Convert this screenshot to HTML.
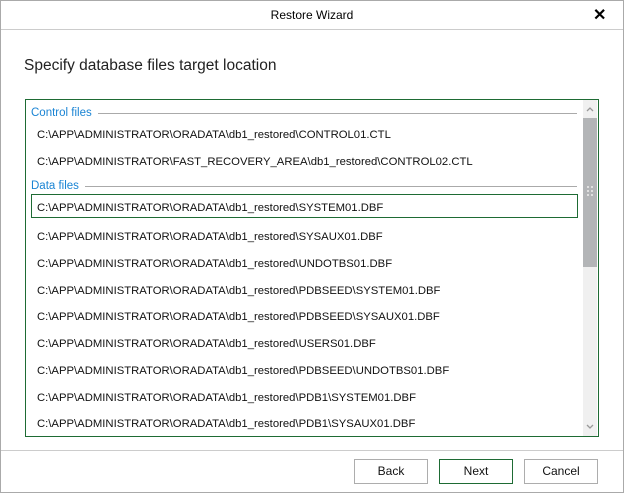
<!DOCTYPE html><html><head><style>
body{margin:0;width:624px;height:493px;font-family:"Liberation Sans",sans-serif;background:#fff;position:relative;overflow:hidden}
.win{position:absolute;left:0;top:0;width:622px;height:491px;border:1px solid #aaa}
.abs{position:absolute}
.row{position:absolute;left:37px;font-size:11.3px;color:#111;white-space:nowrap;line-height:14px}
.sec{position:absolute;left:31px;font-size:11.5px;color:#1a84d4;line-height:14px;background:#fff;padding-right:6px}
.btn{position:absolute;top:459px;width:72px;height:23px;border:1px solid #adadad;font-size:12px;text-align:center;line-height:23px;color:#111}
</style></head><body>
<div class="win"></div>
<div class="abs" style="left:0;top:0;width:624px;text-align:center;top:8px;font-size:12px">Restore Wizard</div>
<div class="abs" style="left:593px;top:5px;font-size:16px;font-weight:bold">✕</div>
<div class="abs" style="left:1px;top:29px;width:622px;height:1px;background:#ccc"></div>
<div class="abs" style="left:24px;top:57px;font-size:15.5px;color:#222">Specify database files target location</div>
<div class="abs" style="left:25px;top:99px;width:572px;height:336px;border:1px solid #1e6b34"></div>
<div class="abs" style="left:583px;top:100px;width:14px;height:336px;background:#f0f0f0"></div>
<div class="abs" style="left:583px;top:118px;width:14px;height:149px;background:#b3b5b7"></div>
<svg class="abs" style="left:583px;top:100px" width="14" height="18"><path d="M4 11 L7 8 L10 11" stroke="#999" stroke-width="1.3" fill="none"/></svg>
<svg class="abs" style="left:583px;top:418px" width="14" height="18"><path d="M4 7 L7 10 L10 7" stroke="#999" stroke-width="1.3" fill="none"/></svg>
<svg class="abs" style="left:583px;top:184px" width="14" height="14"><g fill="#e0e0e0"><rect x="4" y="2" width="2" height="2"/><rect x="8" y="2" width="2" height="2"/><rect x="4" y="6" width="2" height="2"/><rect x="8" y="6" width="2" height="2"/><rect x="4" y="10" width="2" height="2"/><rect x="8" y="10" width="2" height="2"/></g></svg>
<div class="abs" style="left:31px;top:113px;width:546px;height:1px;background:#aaa"></div>
<div class="sec" style="top:106px">Control files</div>
<div class="row" style="top:128px">C:\APP\ADMINISTRATOR\ORADATA\db1_restored\CONTROL01.CTL</div>
<div class="row" style="top:155px">C:\APP\ADMINISTRATOR\FAST_RECOVERY_AREA\db1_restored\CONTROL02.CTL</div>
<div class="abs" style="left:31px;top:186px;width:546px;height:1px;background:#aaa"></div>
<div class="sec" style="top:179px">Data files</div>
<div class="abs" style="left:31px;top:194px;width:545px;height:22px;border:1px solid #1e6b34"></div>
<div class="row" style="top:201px">C:\APP\ADMINISTRATOR\ORADATA\db1_restored\SYSTEM01.DBF</div>
<div class="row" style="top:230px">C:\APP\ADMINISTRATOR\ORADATA\db1_restored\SYSAUX01.DBF</div>
<div class="row" style="top:257px">C:\APP\ADMINISTRATOR\ORADATA\db1_restored\UNDOTBS01.DBF</div>
<div class="row" style="top:284px">C:\APP\ADMINISTRATOR\ORADATA\db1_restored\PDBSEED\SYSTEM01.DBF</div>
<div class="row" style="top:310px">C:\APP\ADMINISTRATOR\ORADATA\db1_restored\PDBSEED\SYSAUX01.DBF</div>
<div class="row" style="top:337px">C:\APP\ADMINISTRATOR\ORADATA\db1_restored\USERS01.DBF</div>
<div class="row" style="top:364px">C:\APP\ADMINISTRATOR\ORADATA\db1_restored\PDBSEED\UNDOTBS01.DBF</div>
<div class="row" style="top:391px">C:\APP\ADMINISTRATOR\ORADATA\db1_restored\PDB1\SYSTEM01.DBF</div>
<div class="row" style="top:417px">C:\APP\ADMINISTRATOR\ORADATA\db1_restored\PDB1\SYSAUX01.DBF</div>
<div class="abs" style="left:1px;top:450px;width:622px;height:1px;background:#ccc"></div>
<div class="btn" style="left:354px">Back</div>
<div class="btn" style="left:439px;border-color:#1e6b34">Next</div>
<div class="btn" style="left:524px">Cancel</div>
</body></html>
